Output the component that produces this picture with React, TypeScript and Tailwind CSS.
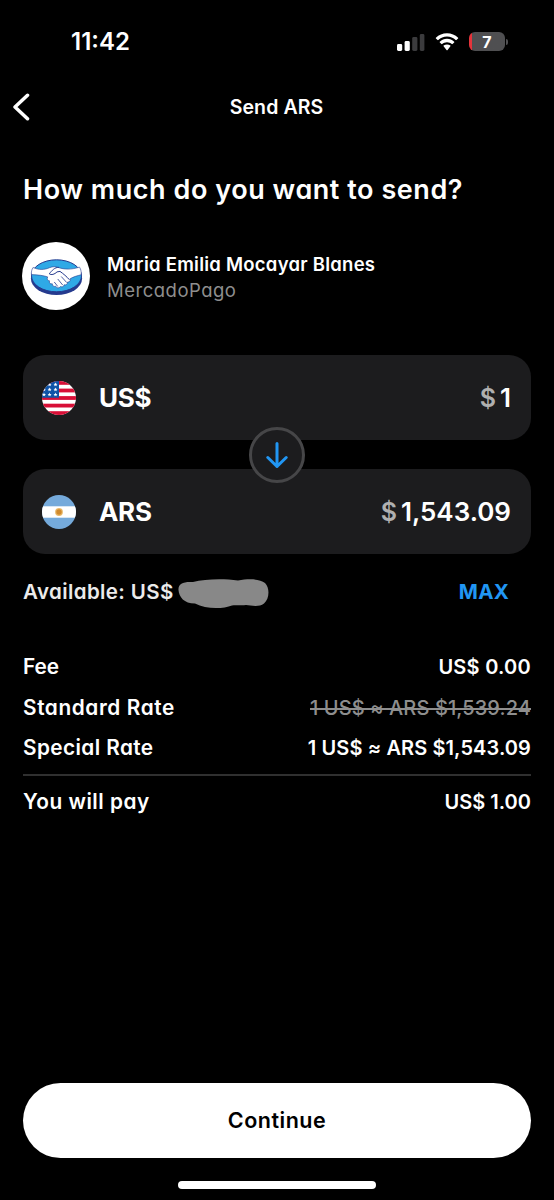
import type { ReactNode } from "react";

const rates = [
  { label: "Fee", value: "US$ 0.00", labelCls: "", valueCls: "tracking-[0.25px]" },
  {
    label: "Standard Rate",
    value: "1 US$ ≈ ARS $1,539.24",
    labelCls: "tracking-[0.6px]",
    valueCls: "font-medium tracking-[0.1px] text-[#8e8e8e] line-through decoration-[1.5px]",
  },
  { label: "Special Rate", value: "1 US$ ≈ ARS $1,543.09", labelCls: "tracking-[0.4px]", valueCls: "tracking-[0.1px]" },
];

function StatusBar() {
  return (
    <div className="flex h-[83px] items-center justify-between pl-[71px] pr-[46px]">
      <span className="text-[24px] font-semibold leading-none">11:42</span>
      <div className="flex items-center">
        <svg width="28" height="18" viewBox="0 0 28 18">
          <rect x="0" y="11" width="5.2" height="7" rx="1.4" fill="#fff" />
          <rect x="7.6" y="8" width="5.2" height="10" rx="1.4" fill="#fff" />
          <rect x="15.2" y="4" width="5.2" height="14" rx="1.4" fill="#3b3b3d" />
          <rect x="22.8" y="1" width="4.6" height="17" rx="1.4" fill="#3b3b3d" />
        </svg>
        <svg className="ml-[10px]" width="24" height="18" viewBox="0 0 24 18">
          <path
            d="M12 3.6c3.4 0 6.4 1.3 8.7 3.5.2.2.5.2.7 0l1.7-1.7c.2-.2.2-.5 0-.7C20.200 1.800 16.300.200 12 .200S3.800 1.800.9 4.700c-.2.2-.2.5 0 .7l1.700 1.700c.2.2.5.2.7 0C5.600 4.900 8.600 3.600 12 3.600z"
            fill="#fff"
          />
          <path
            d="M12 9.200c1.900 0 3.500.7 4.800 1.900.2.2.5.2.7 0l1.700-1.700c.2-.2.2-.5 0-.7C17.300 6.900 14.800 5.800 12 5.800s-5.300 1.100-7.200 2.900c-.2.2-.2.5 0 .7l1.700 1.700c.2.2.5.2.7 0C8.500 9.900 10.100 9.200 12 9.200z"
            fill="#fff"
          />
          <path
            d="M15.400 12.500c.2.2.2.5 0 .7l-3 4c-.2.2-.5.2-.7 0l-3.100-4c-.2-.2-.2-.5 0-.7 1.900-1.500 4.900-1.500 6.800 0z"
            fill="#fff"
          />
        </svg>
        <div className="ml-[10px] flex h-[19px] w-[36px] items-center justify-center overflow-hidden rounded-[6px] bg-linear-to-r from-[#e5343b] from-[3px] to-[#4f4f51] to-[3px]">
          <span className="text-[16px] font-bold leading-none">7</span>
        </div>
        <div className="ml-[1px] h-[6px] w-[2px] rounded-r-full bg-[#4f4f51]" />
      </div>
    </div>
  );
}

function MercadoPagoLogo() {
  return (
    <svg width="68" height="68" viewBox="0 0 68 68" className="shrink-0">
      <circle cx="34" cy="34" r="34" fill="#fff" />
      <ellipse cx="34.500" cy="36.500" rx="25.600" ry="16.500" fill="#253a8e" />
      <ellipse cx="34.500" cy="33.800" rx="25" ry="16" fill="#2fa9e6" stroke="#253a8e" strokeWidth="1" />
      <path
        d="M11 25.500c6 2.700 11.500 2.400 16.500.2 3.500-1.400 6-1.100 8.500-.3 6.500 2.200 13 2.400 21.500-.3 1.500 2.500 2 4.900 1.600 7.700-4 .9-7.500 2-10.900 3.900.7 2-.6 3.500-2.600 3.300.1 2-1.400 3.200-3.400 2.800-.2 1.700-2 2.600-3.700 1.700-1.300 1.900-3.900 1.700-4.800-.3-2 .8-3.500-.5-3.400-2.400-2.200.5-3.500-1.100-2.800-3-1.700-.1-3-2-1.800-3.900-4-1.400-9.500-2-16.300-2.300-.2-2.500.3-5.100 1.600-7.100z"
        fill="#fff"
        stroke="#253a8e"
        strokeWidth=".6"
        strokeLinejoin="round"
      />
      <path
        d="M36.500 25.300c-4 .1-6.500 3.200-9.200 6.500 2 1.500 5.200.6 7.700-1.900l3-.5c3.500 2.500 6.500 5 9.200 8.100"
        fill="none"
        stroke="#253a8e"
        strokeWidth="1"
        strokeLinecap="round"
        strokeLinejoin="round"
      />
      <path
        d="M39.500 34.800l5 5.500M36 37.300l4.500 5.500M32.500 40.300l3 3.800"
        fill="none"
        stroke="#253a8e"
        strokeWidth=".8"
        strokeLinecap="round"
      />
    </svg>
  );
}

function UsFlag() {
  return (
    <svg width="34" height="34" viewBox="0 0 34 34">
      <clipPath id="us">
        <circle cx="17" cy="17" r="17" />
      </clipPath>
      <g clipPath="url(#us)">
        <rect width="34" height="34" fill="#fff" />
        {[0, 7.6, 15.1, 22.7, 30.2].map((y) => (
          <rect key={y} y={y} width="34" height="3.8" fill="#d80f37" />
        ))}
        <rect width="17" height="16.7" fill="#0f54a8" />
        {[3.5, 8.5, 13.6].map((y) =>
          [2, 7.6, 13.5].map((x) => (
            <path
              key={`${x}-${y}`}
              transform={`translate(${x} ${y})`}
              d="M0-2 .55-.65 2-.6.9.3 1.250 1.700 0 .9-1.250 1.700-.9.3-2-.6-.55-.65z"
              fill="#fff"
            />
          )),
        )}
      </g>
    </svg>
  );
}

function ArFlag() {
  return (
    <svg width="34" height="34" viewBox="0 0 34 34">
      <clipPath id="ar">
        <circle cx="17" cy="17" r="17" />
      </clipPath>
      <g clipPath="url(#ar)">
        <rect width="34" height="34" fill="#75aadb" />
        <rect y="11.3" width="34" height="11.4" fill="#fff" />
        <circle cx="17" cy="17" r="3.9" fill="#e9b96a" />
        <circle cx="17" cy="17" r="2.7" fill="#d08a2e" />
      </g>
    </svg>
  );
}

function AmountCard({ flag, code, children }: { flag: ReactNode; code: string; children: ReactNode }) {
  return (
    <div className="flex h-[85px] items-center rounded-[22px] bg-[#1c1c1e] pl-[19px] pr-5">
      {flag}
      <span className="ml-[23px] text-[26px] font-bold leading-none tracking-[-0.3px]">{code}</span>
      <span className="ml-auto flex items-baseline gap-1 text-[26px] font-semibold leading-none">
        <span className="text-[25px] text-[#b0b0b0]">$</span>
        {children}
      </span>
    </div>
  );
}

export default function App() {
  return (
    <div className="flex h-[1200px] w-[554px] flex-col bg-black font-['Inter',sans-serif] text-white [font-feature-settings:'cv11']">
      <StatusBar />
      <header className="grid h-[49px] grid-cols-[40px_1fr_40px] items-center">
        <svg className="-mt-[2px] ml-[12px]" width="18" height="28" viewBox="0 0 18 28" fill="none">
          <path
            d="M15.500 2.300 3 14l12.500 11.700"
            stroke="#fff"
            strokeWidth="3.500"
            strokeLinecap="round"
            strokeLinejoin="round"
          />
        </svg>
        <h1 className="-ml-px pt-px text-center text-[19.5px] font-semibold leading-none tracking-[0.1px]">Send ARS</h1>
      </header>

      <main className="flex flex-1 flex-col px-[23px]">
        <h2 className="mt-[42px] text-[27px] font-semibold leading-[32px] tracking-[0.55px] whitespace-nowrap">
          How much do you want to send?
        </h2>
        <div className="mt-[36px] -ml-px flex h-[68px] items-center gap-[17px]">
          <MercadoPagoLogo />
          <div className="flex flex-col pt-[1px] text-[18.5px] leading-[26px]">
            <span className="font-semibold tracking-[0.25px]">Maria Emilia Mocayar Blanes</span>
            <span className="tracking-[0.5px] text-[#8e8e8e]">MercadoPago</span>
          </div>
        </div>

        <div className="relative mt-[45px] flex flex-col gap-[29px]">
          <AmountCard flag={<UsFlag />} code="US$">
            <span>1</span>
          </AmountCard>
          <AmountCard flag={<ArFlag />} code="ARS">
            <span>1,543.09</span>
          </AmountCard>
          <button className="absolute top-[72px] left-[226px] flex size-[56px] items-center justify-center rounded-full border-[3px] border-[#464648] bg-[#1c1c1e]">
            <svg width="22" height="28" viewBox="0 0 22 28" fill="none">
              <path
                d="M11 2.500v23M1.800 16.500 11 25.500l9.200-9"
                stroke="#2196f3"
                strokeWidth="3"
                strokeLinecap="round"
                strokeLinejoin="round"
              />
            </svg>
          </button>
        </div>

        <div className="mt-[22px] flex h-[32px] items-center text-[20.5px] leading-none">
          <span className="pt-px font-semibold tracking-[0.4px] text-[#ebebeb]">Available: US$</span>
          <svg className="mt-[4px] ml-[4px]" width="91" height="32" viewBox="0 0 91 32">
            <path
              d="M.5 12C0 6 5 3.300 15 4 27 1 45 .5 60 2.500 71 .5 82 .8 87 5c5 5 4.500 16-1 20.500-5 4-13 2-18 1.500-5 1-10-.5-14 .5-9 3.500-26 4-37-2C6 25.500 1 19 .5 12z"
              fill="#888"
            />
          </svg>
          <button className="mr-[22px] ml-auto pt-px font-bold tracking-[0.2px] text-[#2196f3]">MAX</button>
        </div>

        <dl className="mt-[39px] flex flex-col text-[20px] leading-[40.7px] font-semibold">
          {rates.map((r) => (
            <div key={r.label} className="flex justify-between whitespace-nowrap">
              <dt className={`text-[20.8px] ${r.labelCls}`}>{r.label}</dt>
              <dd className={r.valueCls}>{r.value}</dd>
            </div>
          ))}
          <div className="mt-[5px] flex justify-between border-t-2 border-[#303030] pt-[6px]">
            <dt className="text-[20.8px] tracking-[0.5px]">You will pay</dt>
            <dd>US$ 1.00</dd>
          </div>
        </dl>

        <button className="mt-auto h-[75px] rounded-full bg-white text-[21.5px] font-semibold tracking-[0.5px] text-black">
          Continue
        </button>
      </main>
      <div className="mx-auto mt-[23px] mb-[11px] h-[8px] w-[198px] shrink-0 rounded-full bg-white" />
    </div>
  );
}
